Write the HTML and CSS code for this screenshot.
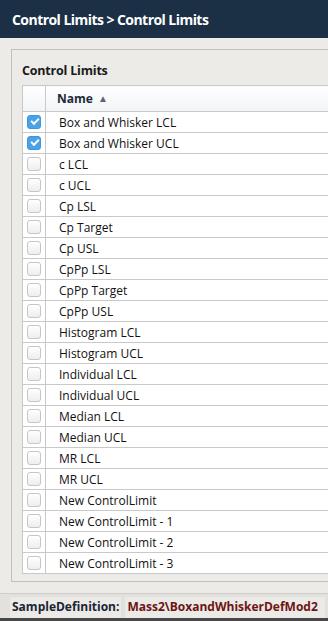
FILE: index.html
```html
<!DOCTYPE html>
<html>
<head>
    <title>Control Limits</title>
    <link rel="stylesheet" href="styles.css">
</head>
<body>

<div class="topbar">Control Limits &gt; Control Limits</div>

<div class="panel">
    <div class="panel-title">Control Limits</div>

    <table class="grid">
        <tr class="head">
            <th class="check-col"></th>
            <th class="name-col">Name <span class="sort-arrow">&#9650;</span></th>
        </tr>
        <tr><td class="check-col"><span class="box checked"></span></td><td>Box and Whisker LCL</td></tr>
        <tr><td class="check-col"><span class="box checked"></span></td><td>Box and Whisker UCL</td></tr>
        <tr><td class="check-col"><span class="box"></span></td><td>c LCL</td></tr>
        <tr><td class="check-col"><span class="box"></span></td><td>c UCL</td></tr>
        <tr><td class="check-col"><span class="box"></span></td><td>Cp LSL</td></tr>
        <tr><td class="check-col"><span class="box"></span></td><td>Cp Target</td></tr>
        <tr><td class="check-col"><span class="box"></span></td><td>Cp USL</td></tr>
        <tr><td class="check-col"><span class="box"></span></td><td>CpPp LSL</td></tr>
        <tr><td class="check-col"><span class="box"></span></td><td>CpPp Target</td></tr>
        <tr><td class="check-col"><span class="box"></span></td><td>CpPp USL</td></tr>
        <tr><td class="check-col"><span class="box"></span></td><td>Histogram LCL</td></tr>
        <tr><td class="check-col"><span class="box"></span></td><td>Histogram UCL</td></tr>
        <tr><td class="check-col"><span class="box"></span></td><td>Individual LCL</td></tr>
        <tr><td class="check-col"><span class="box"></span></td><td>Individual UCL</td></tr>
        <tr><td class="check-col"><span class="box"></span></td><td>Median LCL</td></tr>
        <tr><td class="check-col"><span class="box"></span></td><td>Median UCL</td></tr>
        <tr><td class="check-col"><span class="box"></span></td><td>MR LCL</td></tr>
        <tr><td class="check-col"><span class="box"></span></td><td>MR UCL</td></tr>
        <tr><td class="check-col"><span class="box"></span></td><td>New ControlLimit</td></tr>
        <tr><td class="check-col"><span class="box"></span></td><td>New ControlLimit - 1</td></tr>
        <tr><td class="check-col"><span class="box"></span></td><td>New ControlLimit - 2</td></tr>
        <tr><td class="check-col"><span class="box"></span></td><td>New ControlLimit - 3</td></tr>
    </table>
</div>

<div class="footer">
    <span class="footer-label">SampleDefinition:</span>
    <span class="footer-value">Mass2\BoxandWhiskerDefMod2</span>
</div>

</body>
</html>
```

FILE: styles.css
```css
/* Page */
body {
    margin: 0;
    width: 328px;
    height: 621px;
    overflow: hidden;
    background-color: #ecebe7;
    font-family: "Open Sans", "Noto Sans", sans-serif;
    color: #1a1a1a;
}

/* Dark title bar */
.topbar {
    height: 38px;
    line-height: 40px;
    padding-left: 12px;
    background-color: #1b2f45;
    color: #fff;
    font-weight: bold;
    font-size: 14px;
    letter-spacing: -0.55px;
}

/* Panel holding the list */
.panel {
    margin: 11px 0 0 11px;
    width: 340px;
    border: 1px solid #c2c0bb;
    padding: 0 0 7px 10px;
}

.panel-title {
    padding-top: 13px;
    height: 22px;
    line-height: 16px;
    font-size: 12.5px;
    font-weight: bold;
    letter-spacing: -0.2px;
}

/* Grid */
.grid {
    border-collapse: collapse;
    width: 320px;
    background-color: #fff;
    font-size: 12px;
}

.grid th,
.grid td {
    border: 1px solid #c9c9c9;
    padding: 0;
    text-align: left;
}

.grid tr {
    height: 21px;
}

.grid tr.head {
    height: 26px;
}

.grid th {
    background: linear-gradient(#ffffff, #f1f3f6);
    font-weight: bold;
    font-size: 12px;
}

.check-col {
    width: 22px;
}

.grid td {
    padding-left: 13px;
    line-height: 19px;
    white-space: nowrap;
    color: #111;
}

.grid td.check-col {
    padding-left: 0;
    text-align: center;
    line-height: 0;
}

.name-col {
    padding-left: 11px !important;
    color: #1e2a38;
}

.sort-arrow {
    font-size: 10px;
    color: #5a6470;
    margin-left: 2px;
    vertical-align: 1px;
}

/* Checkboxes */
.box {
    display: inline-block;
    width: 12px;
    height: 12px;
    border: 1px solid #c6c6c6;
    border-radius: 3px;
    background: linear-gradient(#ffffff, #eeeeee);
    position: relative;
}

.box.checked {
    border-color: #3d97de;
    background: #4aa3e6;
}

.box.checked::after {
    content: "";
    position: absolute;
    left: 3px;
    top: 2px;
    width: 6px;
    height: 3px;
    border-left: 2px solid #fff;
    border-bottom: 2px solid #fff;
    transform: rotate(-45deg);
}

/* Footer status bar */
.footer {
    margin-top: 11px;
    height: 24px;
    border-top: 1px solid #cfcdc8;
    border-bottom: 4px solid #474747;
    background-color: #e2e1dd;
    display: flex;
    align-items: flex-end;
    gap: 4px;
    padding-left: 10px;
    font-size: 12px;
    font-weight: bold;
}

.footer-label,
.footer-value {
    background-color: #ebeae6;
    height: 21px;
    line-height: 20px;
    padding: 0 2px;
}

.footer-label {
    color: #1a2433;
}

.footer-value {
    color: #6e1414;
    flex: 1;
    margin-right: 3px;
}
```
